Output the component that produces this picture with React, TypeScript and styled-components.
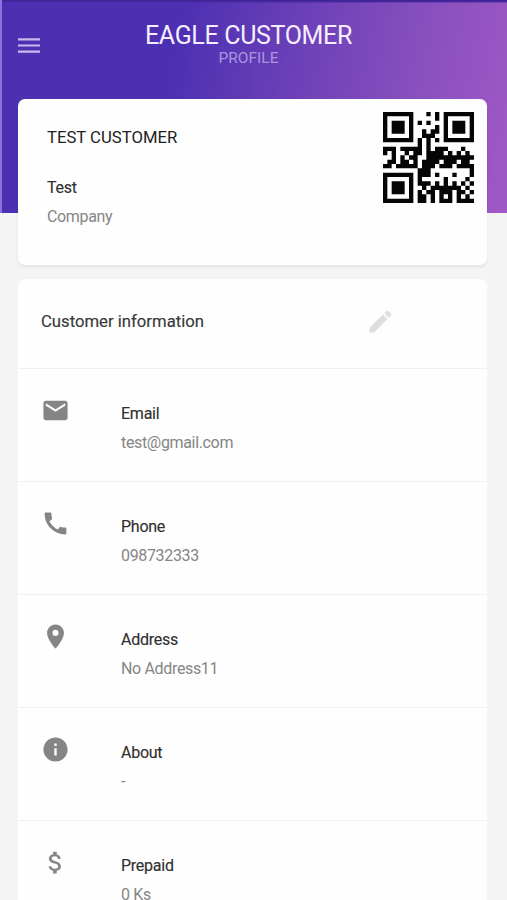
import React from 'react';
import styled, { createGlobalStyle } from 'styled-components';
import { MdEmail, MdLocationOn, MdInfo, MdAttachMoney, MdEdit } from 'react-icons/md';

const GlobalStyle = createGlobalStyle`
  *, *::before, *::after { box-sizing: border-box; }
  html, body { margin: 0; background: #f4f4f4; }
  body { font-family: Roboto, sans-serif; overflow: hidden; }
`;

const Page = styled.main`
  position: relative;
  height: 900px;
  overflow: hidden;
  background: #f4f4f4;
`;

const Header = styled.header`
  height: 213px;
  border-left: 2px solid #8b72e0;
  background:
    linear-gradient(#3c208f, #4a2ba5 2px, transparent 3px),
    linear-gradient(101deg, #4b30b2 0%, #4b30b2 33%, #6c40b7 56%, #8850be 79%, #a158c7 100%);
  display: grid;
  grid-template-columns: 54px 1fr 66px;
  align-items: start;
`;

const MenuButton = styled.button`
  margin: 38px 0 0 16px;
  padding: 0;
  width: 22px;
  height: 15px;
  border: 0;
  background: none;
  color: #c9b9ee;
  line-height: 0;
`;

const Heading = styled.div`
  padding-top: 22px;
  text-align: center;
`;

const Title = styled.h1`
  margin: 0;
  font-size: 25px;
  line-height: 27px;
  font-weight: 400;
  letter-spacing: -0.34px;
  color: #f6edff;
`;

const Subtitle = styled.p`
  margin: 0;
  font-size: 15.5px;
  line-height: 18px;
  color: #a995df;
`;

const Content = styled.div`
  margin: -114px 20px 0 18px;
  position: relative;
  display: grid;
  gap: 14px;
`;

const Card = styled.section`
  background: #fefefe;
  border-radius: 7px;
`;

const SummaryCard = styled(Card)`
  height: 166px;
  padding: 13px 13px 0 29px;
  display: flex;
  justify-content: space-between;
  box-shadow: 0 2px 3px rgba(0, 0, 0, 0.07);
`;

const Name = styled.h2`
  margin: 15px 0 28px;
  font-size: 16.7px;
  line-height: 22px;
  font-weight: 400;
  color: #222;
`;

const Label = styled.div`
  font-size: 16px;
  line-height: 22px;
  letter-spacing: -0.25px;
  color: #303030;
  -webkit-text-stroke: 0.15px currentColor;
`;

const Value = styled.div`
  margin-top: 11px;
  font-size: 16px;
  line-height: 14px;
  letter-spacing: -0.34px;
  color: #858585;
`;

const SectionHead = styled.div`
  height: 90px;
  padding: 0 92px 4px 23px;
  display: flex;
  align-items: center;
  justify-content: space-between;
  border-bottom: 1px solid #f0f0f0;
`;

const SectionTitle = styled.h3`
  margin: 0;
  font-size: 16.7px;
  font-weight: 400;
  color: #383838;
  -webkit-text-stroke: 0.15px currentColor;
`;

const EditButton = styled.button`
  border: 0;
  padding: 0;
  background: none;
  line-height: 0;
  color: #dedede;
`;

const Row = styled.div`
  height: 113px;
  padding: 27px 23px 0;
  display: grid;
  grid-template-columns: 80px 1fr;
  align-items: start;
  border-bottom: 1px solid #f1f1f1;
`;

const RowIcon = styled.span`
  display: flex;
  color: #858585;
`;

const RowText = styled.div`
  padding-top: 7px;
`;

const Code = styled.svg`
  display: block;
  width: 91px;
  height: 91px;
`;

const qrRows = [
  '#######...#.#.#######',
  '#.....#.....#.#.....#',
  '#.###.#.#.#...#.###.#',
  '#.###.#.....#.#.###.#',
  '#.###.#..#.##.#.###.#',
  '#.....#..###..#.....#',
  '#######.#.#.#.#######',
  '........#.#..........',
  '###.#####.#.###...#..',
  '#.#..#.##.####.#.#.#.',
  '..#.#.##..###########',
  '.##.##.#.####.###.##.',
  '##.#####.###.###.####',
  '........###.........#',
  '#######.###.#...#...#',
  '#.....#.#.....#....#.',
  '#.###.#.###.#.#.#.#.#',
  '#.###.#..#.#######.#.',
  '#.###.#.#.##.###.##.#',
  '#.....#.##.#.#.#.#.#.',
  '#######.##.#.###.####',
];

const QrCode = () => (
  <Code viewBox="0 0 21 21" shapeRendering="geometricPrecision" aria-label="Customer QR code">
    <path
      fill="#050505"
      d={qrRows
        .map((row, y) =>
          [...row.matchAll(/#+/g)].map((m) => `M${m.index} ${y}h${m[0].length}v1h-${m[0].length}z`).join(''),
        )
        .join('')}
    />
  </Code>
);

type IconProps = { size: number };

const PhoneIcon = ({ size }: IconProps) => (
  <svg width={size} height={size} viewBox="0 0 24 24" fill="currentColor">
    <path d="M20.01 15.38c-1.23 0-2.42-.2-3.53-.56-.35-.12-.74-.03-1.01.24l-1.57 1.97c-2.83-1.35-5.48-3.9-6.89-6.83l1.95-1.66c.27-.28.35-.67.24-1.02-.37-1.11-.56-2.3-.56-3.53 0-.54-.45-.99-.99-.99H4.19C3.65 3 3 3.24 3 3.99 3 13.28 10.73 21 20.01 21c.71 0 .99-.63.99-1.18v-3.45c0-.54-.45-.99-.99-.99z" />
  </svg>
);

const MenuIcon = () => (
  <svg width="22" height="15" viewBox="0 0 22 15" stroke="currentColor" strokeWidth="2.2">
    <path d="M0 1.3h22M0 7.5h22M0 13.7h22" />
  </svg>
);

const details: { icon: React.ComponentType<IconProps>; label: string; value: string }[] = [
  { icon: MdEmail, label: 'Email', value: 'test@gmail.com' },
  { icon: PhoneIcon, label: 'Phone', value: '098732333' },
  { icon: MdLocationOn, label: 'Address', value: 'No Address11' },
  { icon: MdInfo, label: 'About', value: '-' },
  { icon: MdAttachMoney, label: 'Prepaid', value: '0 Ks' },
];

export default function App() {
  return (
    <Page>
      <GlobalStyle />
      <Header>
        <MenuButton aria-label="Menu"><MenuIcon /></MenuButton>
        <Heading>
          <Title>EAGLE CUSTOMER</Title>
          <Subtitle>PROFILE</Subtitle>
        </Heading>
      </Header>
      <Content>
        <SummaryCard>
          <div>
            <Name>TEST CUSTOMER</Name>
            <Label>Test</Label>
            <Value>Company</Value>
          </div>
          <QrCode />
        </SummaryCard>
        <Card>
          <SectionHead>
            <SectionTitle>Customer information</SectionTitle>
            <EditButton aria-label="Edit"><MdEdit size={29} /></EditButton>
          </SectionHead>
          {details.map(({ icon: Icon, label, value }) => (
            <Row key={label}>
              <RowIcon><Icon size={29} /></RowIcon>
              <RowText>
                <Label>{label}</Label>
                <Value>{value}</Value>
              </RowText>
            </Row>
          ))}
        </Card>
      </Content>
    </Page>
  );
}
